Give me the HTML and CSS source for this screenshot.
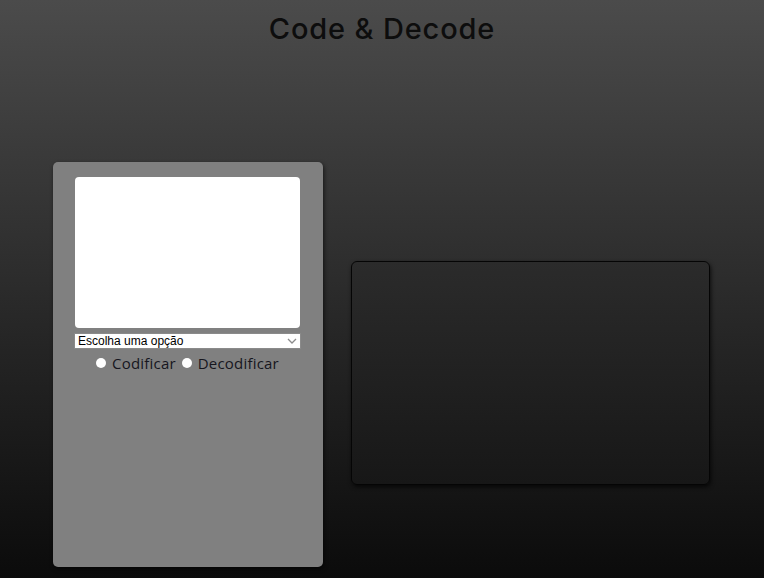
FILE: index.html
```html
<!DOCTYPE html>
<html lang="pt-BR">
<head>
<meta charset="utf-8">
<title>Code &amp; Decode</title>
<link rel="stylesheet" href="styles.css">
</head>
<body>
<h1 class="title">Code &amp; Decode</h1>
<main class="layout">
  <section class="card">
    <textarea class="input-text"></textarea>
    <div class="select-wrap">
      <select class="choice">
        <option>Escolha uma opção</option>
      </select>
      <svg class="chevron" width="10" height="6" viewBox="0 0 10 6"><path d="M1 1 L5 5 L9 1" fill="none" stroke="#8c8c8c" stroke-width="1.3"/></svg>
    </div>
    <div class="radios">
      <label class="radio-label"><input type="radio" name="mode" class="radio"> Codificar</label>
      <label class="radio-label"><input type="radio" name="mode" class="radio"> Decodificar</label>
    </div>
  </section>
  <section class="output"></section>
</main>
</body>
</html>
```
FILE: styles.css
```css
html, body {
  margin: 0;
  padding: 0;
}
body {
  width: 764px;
  height: 578px;
  overflow: hidden;
  background: linear-gradient(to bottom, #4b4b4b 0%, #0b0b0b 100%);
  font-family: "Open Sans", "Noto Sans", sans-serif;
}
.title {
  margin: 0;
  padding-top: 11px;
  text-align: center;
  font-family: Inter, "Open Sans", sans-serif;
  font-weight: 500;
  font-size: 29px;
  line-height: 36px;
  color: #0d0d0d;
  letter-spacing: 0.85px;
}
.layout {
  display: flex;
  align-items: flex-start;
  gap: 28px;
  padding-left: 53px;
  margin-top: 115px;
}
.card {
  width: 270px;
  height: 405px;
  box-sizing: border-box;
  background: #808080;
  border-radius: 5px;
  box-shadow: 1px 2px 4px rgba(0,0,0,0.6);
  display: flex;
  flex-direction: column;
  align-items: center;
  padding-top: 15px;
  padding-right: 1px;
}
.input-text {
  width: 225px;
  height: 151px;
  box-sizing: border-box;
  border: none;
  border-radius: 4px;
  background: #fff;
  resize: none;
  margin: 0;
}
.select-wrap {
  position: relative;
  width: 227px;
  height: 16px;
  margin-top: 5px;
}
.choice {
  appearance: none;
  -webkit-appearance: none;
  display: block;
  width: 227px;
  height: 16px;
  box-sizing: border-box;
  margin: 0;
  padding: 0 0 0 3px;
  font-family: "Liberation Sans", Arial, sans-serif;
  font-size: 12px;
  line-height: 14px;
  color: #000;
  background: #fff;
  border: 1px solid #8a8a8a;
  border-radius: 0;
}
.chevron {
  position: absolute;
  right: 4px;
  top: 5px;
  pointer-events: none;
}
.radios {
  display: flex;
  gap: 6px;
  margin-top: 5px;
  font-size: 15px;
  line-height: 18px;
  letter-spacing: 0.2px;
  color: #16161e;
}
.radio-label {
  display: flex;
  align-items: center;
  gap: 6px;
}
.radio {
  appearance: none;
  -webkit-appearance: none;
  width: 10px;
  height: 10px;
  margin: 0;
  border-radius: 50%;
  background: #fff;
  border: none;
}
.output {
  margin-top: 99px;
  width: 359px;
  height: 224px;
  box-sizing: border-box;
  border: 1px solid #050505;
  border-radius: 6px;
  background: linear-gradient(to bottom, #2b2b2b, #171717);
  box-shadow: 1px 2px 4px rgba(0,0,0,0.7);
}
```
